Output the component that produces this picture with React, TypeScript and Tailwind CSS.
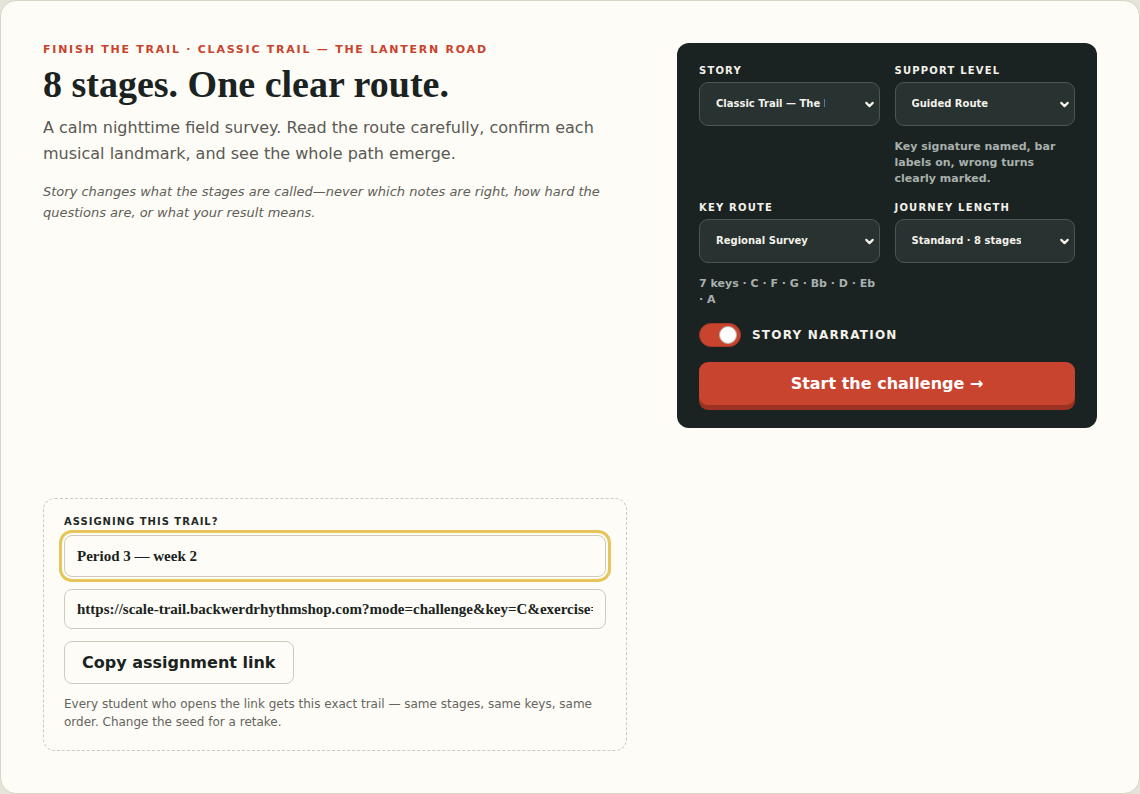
import { ChevronDown } from "lucide-react";

const sans = "font-['DejaVu_Sans',sans-serif]";
const serif = "font-['Liberation_Serif',serif]";

function Field({
  label,
  value,
  note,
}: {
  label: string;
  value: string;
  note?: string;
}) {
  return (
    <div className="flex flex-col">
      <div className="text-[10px] font-bold tracking-[0.12em] text-[#f3f1ea] leading-[13px]">
        {label}
      </div>
      <div className="mt-[5px] h-[44px] rounded-[9px] border border-[#4b5652] bg-[#283230] flex items-center pl-[16px] pr-[3px]">
        <span className="w-[109px] overflow-hidden whitespace-nowrap text-[10px] font-bold text-[#f3f1ea] pb-[1px]">
          {value}
        </span>
        <span className="flex-1" />
        <ChevronDown className="w-[13px] h-[13px] text-[#f3f1ea]" strokeWidth={4} />
      </div>
      {note && (
        <p className="mt-[13px] text-[11px] font-bold leading-[16px] text-[#a8b0ad]">{note}</p>
      )}
    </div>
  );
}

function SettingsPanel() {
  return (
    <div className={`${sans} rounded-[12px] bg-[#1a2321] px-[22px] pt-[21px] pb-[23px]`}>
      <div className="grid grid-cols-2 gap-x-[15px]">
        <Field label="STORY" value="Classic Trail — The Lantern Road" />
        <Field
          label="SUPPORT LEVEL"
          value="Guided Route"
          note="Key signature named, bar labels on, wrong turns clearly marked."
        />
        <div className="mt-[14px]">
          <Field label="KEY ROUTE" value="Regional Survey" note="7 keys · C · F · G · Bb · D · Eb · A" />
        </div>
        <div className="mt-[14px]">
          <Field label="JOURNEY LENGTH" value="Standard · 8 stages" />
        </div>
      </div>

      <div className="mt-[15px] flex items-center gap-[11px]">
        <div className="w-[42px] h-[24px] rounded-full bg-[#c8442f] border border-[#a9382a] flex items-center justify-end pr-[3px]">
          <div className="w-[18px] h-[18px] rounded-full bg-white border border-[#b8b2a8]" />
        </div>
        <span className="text-[12px] font-bold tracking-[0.1em] text-[#f3f1ea]">STORY NARRATION</span>
      </div>

      <button className="mt-[15px] w-full h-[43px] rounded-[9px] bg-[#c8442f] shadow-[0_5px_0_#9c3222] text-white text-[16px] font-bold">
        Start the challenge →
      </button>
    </div>
  );
}

function AssignBox() {
  const field = `${serif} block w-full rounded-[8px] border border-[#cfcabd] bg-[#fdfcf6] px-[12px] text-[15px] font-bold text-[#1a2321] outline-none`;
  return (
    <div className={`${sans} w-[584px] rounded-[12px] border border-dashed border-[#cfcabd] px-[20px] pt-[16px] pb-[19px]`}>
      <div className="text-[10px] font-bold tracking-[0.1em] text-[#1f2a28] leading-[14px]">
        ASSIGNING THIS TRAIL?
      </div>
      <input
        readOnly
        value="Period 3 — week 2"
        className={`${field} mt-[6px] h-[42px] ring-[3px] ring-[#e8c55a] ring-offset-2 ring-offset-[#fdfcf6]`}
      />
      <input
        readOnly
        value="https://scale-trail.backwerdrhythmshop.com?mode=challenge&key=C&exercise=classic&seed=4411"
        className={`${field} mt-[12px] h-[40px]`}
      />
      <button className="mt-[12px] h-[43px] px-[17px] rounded-[8px] border border-[#cfcabd] bg-[#fdfcf6] text-[16px] font-bold text-[#1a2321]">
        Copy assignment link
      </button>
      <p className="mt-[11px] text-[12px] leading-[18px] text-[#66645e]">
        Every student who opens the link gets this exact trail — same stages, same keys, same
        order. Change the seed for a retake.
      </p>
    </div>
  );
}

export default function App() {
  return (
    <div className="min-h-screen bg-[#e6e3d9]">
      <div className="min-h-[794px] rounded-[16px] border border-[#d8d4c6] bg-[#fdfcf6] px-[42px] pt-[42px] pb-[42px] flex flex-col">
        <div className="grid grid-cols-[584px_420px] gap-x-[50px]">
          <div className={sans}>
            <div className="mt-[1px] text-[11px] font-bold tracking-[0.16em] text-[#c8432d] leading-[12px]">
              FINISH THE TRAIL · CLASSIC TRAIL — THE LANTERN ROAD
            </div>
            <h1 className={`${serif} mt-[6px] text-[38px] font-bold leading-[44px] text-[#1a2321]`}>
              8 stages. One clear route.
            </h1>
            <p className="mt-[9px] text-[16px] leading-[26px] text-[#5a5954]">
              A calm nighttime field survey. Read the route carefully, confirm each musical
              landmark, and see the whole path emerge.
            </p>
            <p className="mt-[14px] text-[13px] italic leading-[21px] text-[#5f5e58]">
              Story changes what the stages are called—never which notes are right, how hard the
              questions are, or what your result means.
            </p>
          </div>
          <SettingsPanel />
        </div>
        <div className="mt-auto">
          <AssignBox />
        </div>
      </div>
    </div>
  );
}
